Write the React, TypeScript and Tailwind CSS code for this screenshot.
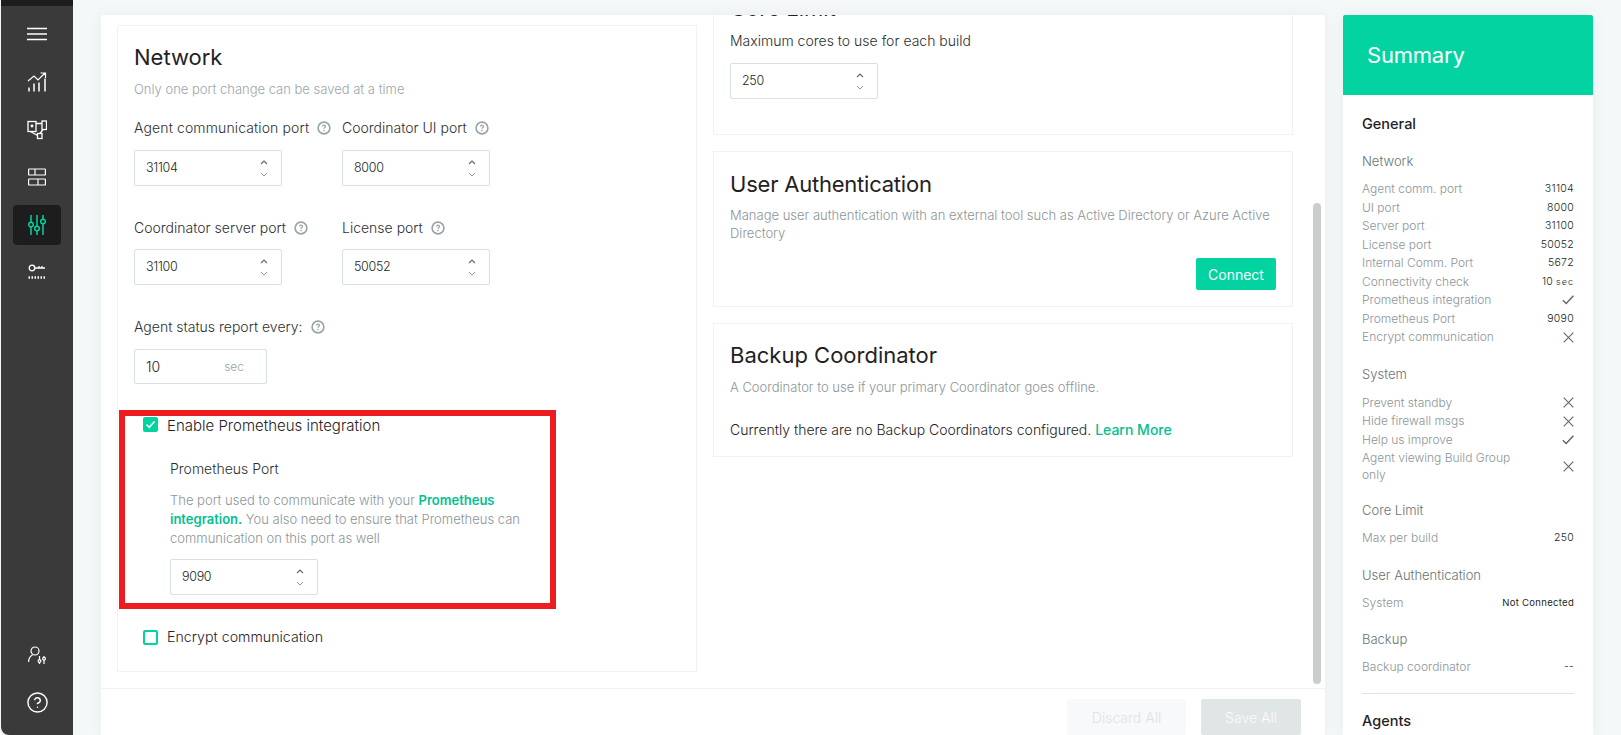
import type { ReactNode } from 'react';
import { CircleHelp } from 'lucide-react';

const GREEN = 'bg-[#02d3a1]';

function HelpDot() {
  return (
    <svg width="14" height="14" viewBox="0 0 14 14" fill="none" className="shrink-0 text-[#98a3a5]">
      <circle cx="7" cy="7" r="5.9" stroke="currentColor" strokeWidth="1.6" />
      <path d="M5.5 5.6c0-1.900 3-1.900 3-.1 0 1-1.500 1-1.500 2.200" stroke="currentColor" strokeWidth="1.200" />
      <circle cx="7" cy="9.600" r=".8" fill="currentColor" />
    </svg>
  );
}

function Label({ text, className = '' }: { text: string; className?: string }) {
  return (
    <div className={`flex h-5 items-center gap-2 text-[14px] leading-5 text-[#2b2f31] ${className}`}>
      <span>{text}</span>
      <HelpDot />
    </div>
  );
}

function NumberField({ value, className = '' }: { value: string; className?: string }) {
  return (
    <div className={`flex w-[148px] items-center justify-between rounded-[2px] border border-[#d9e0e2] pl-[11px] pr-[13px] ${className}`}>
      <span className="text-[12.5px] tracking-[-0.3px] text-[#1c1f20]">{value}</span>
      <span className="flex flex-col items-center gap-[7px]">
        <svg width="8" height="5" viewBox="0 0 8 5" fill="none"><path d="M1 4l3-3 3 3" stroke="#5f686b" strokeWidth="1.1" /></svg>
        <svg width="8" height="5" viewBox="0 0 8 5" fill="none"><path d="M1 1l3 3 3-3" stroke="#8b9598" strokeWidth="1" /></svg>
      </span>
    </div>
  );
}

function Card({ className = '', children }: { className?: string; children: ReactNode }) {
  return <section className={`border border-[#f0f2f3] bg-white pl-4 pr-4 ${className}`}>{children}</section>;
}

function CheckRow({ checked, text, className = '' }: { checked: boolean; text: string; className?: string }) {
  return (
    <div className={`flex h-5 items-center gap-[9px] pl-[9px] text-[#1f2224] ${className}`}>
      {checked ? (
        <span className={`flex h-[15px] w-[15px] -translate-y-[2px] items-center justify-center rounded-[2px] ${GREEN}`}>
          <svg width="11" height="9" viewBox="0 0 11 9" fill="none"><path d="M1.5 4.500l2.800 2.800L9.500 1.500" stroke="#fff" strokeWidth="1.6" /></svg>
        </span>
      ) : (
        <span className="h-[15px] w-[15px] rounded-[2px] border-2 border-[#02d3a1]" />
      )}
      <span>{text}</span>
    </div>
  );
}

function Cross() {
  return (
    <svg width="11" height="11" viewBox="0 0 11 11" fill="none"><path d="M.7.7l9.600 9.600M10.300.7L.7 10.300" stroke="#5f686b" strokeWidth="1.100" /></svg>
  );
}

function Tick() {
  return (
    <svg width="12" height="10" viewBox="0 0 12 10" fill="none"><path d="M.8 5.200l3.400 3.300L11.400.8" stroke="#5f686b" strokeWidth="1.500" /></svg>
  );
}

function Row({ name, children }: { name: string; children: ReactNode }) {
  return (
    <div className="flex h-[18.5px] items-center justify-between text-[12px] text-[#8b9598]">
      <span>{name}</span>
      <span className="flex items-center text-[10.5px] tracking-[0.3px] text-[#1c1f20]">{children}</span>
    </div>
  );
}

function SubHead({ text, className = '' }: { text: string; className?: string }) {
  return <div className={`h-5 text-[13px] leading-5 text-[#697275] ${className}`}>{text}</div>;
}

function Sidebar() {
  return (
    <nav className="ml-px flex h-[735px] w-[72px] shrink-0 flex-col items-center rounded-bl-lg border-t-[6px] border-t-[#1d1d1d] bg-[#3a3a3a] text-white">
      {/* menu */}
      <svg className="mt-[21px]" width="20" height="14" viewBox="0 0 20 14" fill="none" stroke="currentColor" strokeWidth="1.300">
        <path d="M0 1.500h20M0 7h20M0 12.500h20" />
      </svg>
      {/* chart */}
      <svg className="mt-[31px]" width="20" height="20" viewBox="0 0 20 20" fill="none" stroke="currentColor" strokeWidth="1.200">
        <path d="M1 9l6-5 4 4 7-7M13.500 1H18.500v5" />
        <path d="M2 19.500v-4M7 19.500v-8M12 19.500v-9M18 19.500v-13" strokeWidth="1.500" />
      </svg>
      {/* nodes */}
      <svg className="mt-[28px]" width="20" height="20" viewBox="0 0 20 20" fill="none" stroke="currentColor" strokeWidth="1.300">
        <rect x="1" y="1.500" width="8" height="10" />
        <rect x="15" y="1" width="4.500" height="8.500" />
        <rect x="10.500" y="13.500" width="4.500" height="5" />
        <path d="M9 3.500h6M3.500 11.500l7 4M13 13.500l3-4" />
        <circle cx="5" cy="6" r=".8" fill="currentColor" />
      </svg>
      {/* layout */}
      <svg className="mt-[28px]" width="18" height="18" viewBox="0 0 18 18" fill="none" stroke="currentColor" strokeWidth="1.200">
        <rect x=".6" y="1" width="16.800" height="6" rx=".6" />
        <rect x=".6" y="11" width="16.800" height="6" rx=".6" />
        <path d="M7 1v6M10 11v6" />
      </svg>
      {/* active settings */}
      <div className="mt-[19px] flex h-10 w-12 items-center justify-center rounded-[4px] bg-[#1d1d1d]">
        <svg width="18" height="20" viewBox="0 0 18 20" fill="none" stroke="#02d3a1" strokeWidth="1.500">
          <path d="M3 0v7M3 12v8M9 0v11M9 16v4M15 0v4M15 9v11" />
          <circle cx="3" cy="9.500" r="2.300" />
          <circle cx="9" cy="13.500" r="2.300" />
          <circle cx="15" cy="6.500" r="2.300" />
        </svg>
      </div>
      {/* key */}
      <svg className="mt-[19px]" width="18" height="15" viewBox="0 0 18 15" fill="none" stroke="currentColor" strokeWidth="1.300">
        <circle cx="4" cy="4" r="2.800" />
        <path d="M7 4h10M11 4V2M14 4V2" />
        <path d="M.5 13.500h17" strokeWidth="2.500" strokeDasharray="1.500 1.500" />
      </svg>
      <div className="flex-1" />
      {/* user settings */}
      <svg className="mb-[26px]" width="19" height="19" viewBox="0 0 19 19" fill="none" stroke="currentColor" strokeWidth="1.200">
        <circle cx="7" cy="5" r="4" />
        <path d="M.6 16c0-3.500 1.800-6 3.900-7" />
        <path d="M11.500 10v8M16 10v8" />
        <circle cx="11.500" cy="15" r="1.400" fill="#3a3a3a" />
        <circle cx="16" cy="12.800" r="1.400" fill="#3a3a3a" />
      </svg>
      <CircleHelp className="mb-[21px]" size={23} strokeWidth={1.500} />
    </nav>
  );
}

export default function App() {
  return (
    <div className="flex h-[735px] w-[1621px] overflow-hidden bg-[#f5f8f9] font-[Inter,sans-serif] font-light">
      <Sidebar />

      <main className="ml-7 mt-[15px] flex h-[720px] w-[1224px] shrink-0 flex-col rounded-t-[2px] bg-white shadow-[0_0_14px_rgba(60,80,90,0.07)]">
        <div className="flex h-[674px] shrink-0 overflow-hidden border-b border-[#f0f2f3] pl-4">
          {/* left column */}
          <Card className="relative mt-[10px] h-[647px] w-[580px] shrink-0 pt-[17px]">
            <h2 className="h-7 text-[22px] font-normal leading-7 text-[#1f2224]">Network</h2>
            <p className="mt-2 h-5 text-[13px] leading-5 text-[#9ba6a8]">Only one port change can be saved at a time</p>

            <div className="mt-[19px] grid w-[356px] grid-cols-[208px_148px]">
              <div>
                <Label text="Agent communication port" className="tracking-[0.12px]" />
                <NumberField value="31104" className="mt-3 h-9" />
              </div>
              <div>
                <Label text="Coordinator UI port" />
                <NumberField value="8000" className="mt-3 h-9" />
              </div>
              <div className="mt-8">
                <Label text="Coordinator server port" />
                <NumberField value="31100" className="mt-[11px] h-9" />
              </div>
              <div className="mt-8">
                <Label text="License port" />
                <NumberField value="50052" className="mt-[11px] h-9" />
              </div>
            </div>

            <div className="mt-8">
              <Label text="Agent status report every:" />
              <div className="mt-3 flex h-[35px] w-[133px] items-center justify-between rounded-[2px] border border-[#d9e0e2] pl-[11px] pr-[22px]">
                <span className="text-[14px] text-[#1c1f20]">10</span>
                <span className="text-[12px] text-[#9ba6a8]">sec</span>
              </div>
            </div>

            <CheckRow checked text="Enable Prometheus integration" className="mt-8 text-[15px]" />
            <div className="pl-9">
              <div className="mt-[23px] h-5 text-[14px] leading-5 text-[#2b2f31]">Prometheus Port</div>
              <p className="mt-3 w-[352px] text-[13px] leading-[19px] text-[#8b9598]">
                The port used to communicate with your{' '}
                <span className="font-semibold text-[#02bf92]">Prometheus integration.</span> You also need to ensure that Prometheus can communication on this port as well
              </p>
              <NumberField value="9090" className="mt-[11px] h-9" />
            </div>
            <CheckRow checked={false} text="Encrypt communication" className="mt-8 text-[14.2px]" />

            {/* annotation drawn on top of the screenshot */}
            <div className="pointer-events-none absolute left-[1px] top-[384px] h-[199px] w-[437px] border-[6px] border-[#ec1c20]" />
          </Card>

          {/* right column */}
          <div className="ml-4 w-[580px] shrink-0">
            <Card className="-mt-[40px] h-[160px] pt-[18px]">
              <h2 className="h-7 text-[22px] font-normal leading-7 text-[#1f2224]">Core Limit</h2>
              <div className="mt-[9px] h-5 text-[14px] leading-5 text-[#2b2f31]">Maximum cores to use for each build</div>
              <NumberField value="250" className="mt-3 h-9" />
            </Card>

            <Card className="mt-4 flex h-[156px] flex-col pt-[18px]">
              <h2 className="h-7 text-[22px] font-normal leading-7 tracking-[-0.22px] text-[#1f2224]">User Authentication</h2>
              <p className="mt-2 text-[13px] leading-[18px] text-[#8b9598]">
                Manage user authentication with an external tool such as Active Directory or Azure Active Directory
              </p>
              <button className={`mt-4 h-8 w-20 self-end rounded-[2px] text-[14px] font-normal text-white ${GREEN}`}>Connect</button>
            </Card>

            <Card className="mt-4 h-[134px] pt-[17px]">
              <h2 className="h-7 text-[22px] font-normal leading-7 text-[#1f2224]">Backup Coordinator</h2>
              <p className="mt-2 h-5 text-[13px] leading-5 text-[#8b9598]">A Coordinator to use if your primary Coordinator goes offline.</p>
              <p className="mt-[23px] h-5 text-[14px] leading-5 text-[#1f2224]">
                Currently there are no Backup Coordinators configured.{' '}
                <span className="font-medium text-[#02bf92]">Learn More</span>
              </p>
            </Card>
          </div>

          {/* scrollbar */}
          <div className="ml-[20px] mt-[188px] h-[481px] w-2 shrink-0 rounded-sm bg-[#c9cdce]" />
        </div>

        <div className="flex justify-end gap-[15px] pr-6 pt-[10px]">
          <button className="h-9 w-[119px] rounded-[2px] bg-[#f8f9fa] text-[14px] text-[#dfe3e5]">Discard All</button>
          <button className="h-9 w-[100px] rounded-[2px] bg-[#e0e5e6] text-[14px] text-[#fbfcfc]">Save All</button>
        </div>
      </main>

      {/* summary */}
      <aside className="ml-[18px] mt-[15px] h-[720px] w-[250px] shrink-0 bg-white shadow-[0_0_14px_rgba(60,80,90,0.07)]">
        <div className={`flex h-20 items-center rounded-t-[2px] pl-6 text-[22px] font-normal tracking-[-0.2px] text-white ${GREEN}`}>Summary</div>
        <div className="px-[19px] pt-[19px]">
          <h3 className="h-5 text-[14.5px] font-medium leading-5 text-[#1f2224]">General</h3>

          <SubHead text="Network" className="mt-[17px]" />
          <div className="mt-[9px]">
            <Row name="Agent comm. port">31104</Row>
            <Row name="UI port">8000</Row>
            <Row name="Server port">31100</Row>
            <Row name="License port">50052</Row>
            <Row name="Internal Comm. Port">5672</Row>
            <Row name="Connectivity check">10<span className="ml-[3px] text-[9px] tracking-[1px]">sec</span></Row>
            <Row name="Prometheus integration"><Tick /></Row>
            <Row name="Prometheus Port">9090</Row>
            <Row name="Encrypt communication"><Cross /></Row>
          </div>

          <SubHead text="System" className="mt-[17px]" />
          <div className="mt-[10px]">
            <Row name="Prevent standby"><Cross /></Row>
            <Row name="Hide firewall msgs"><Cross /></Row>
            <Row name="Help us improve"><Tick /></Row>
            <div className="flex h-[34px] items-center justify-between text-[12px] leading-[17px] text-[#8b9598]">
              <span className="w-[160px]">Agent viewing Build Group only</span>
              <Cross />
            </div>
          </div>

          <SubHead text="Core Limit" className="mt-[17px]" />
          <div className="mt-[9px]"><Row name="Max per build">250</Row></div>

          <SubHead text="User Authentication" className="mt-[17px]" />
          <div className="mt-[9px]"><Row name="System"><span className="text-[9.5px] font-normal">Not Connected</span></Row></div>

          <SubHead text="Backup" className="mt-[17px]" />
          <div className="mt-[9px]"><Row name="Backup coordinator">--</Row></div>

          <div className="mt-4 border-t border-[#dfe4e5]" />
          <h3 className="mt-[17px] h-5 text-[14.5px] font-medium leading-5 text-[#1f2224]">Agents</h3>
        </div>
      </aside>
    </div>
  );
}
